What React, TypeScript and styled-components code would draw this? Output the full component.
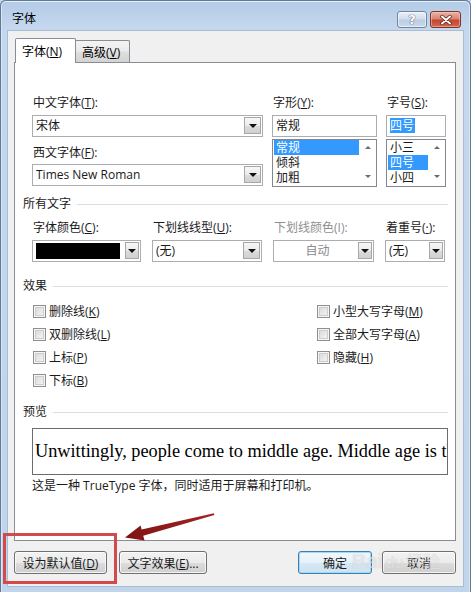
import React from "react";
import styled, { createGlobalStyle, css } from "styled-components";

const GlobalStyle = createGlobalStyle`
  html, body { margin: 0; padding: 0; background: #c2d5ec; }
  body {
    font-family: "Open Sans", "Noto Sans CJK SC", sans-serif;
    font-size: 12px;
    color: #1a1a1a;
  }
  * { box-sizing: border-box; }
`;

const Frame = styled.div`
  position: relative;
  width: 471px;
  height: 592px;
  padding: 0 8px 6px;
  display: flex;
  flex-direction: column;
  background: linear-gradient(180deg, #b3cbe6 0px, #c4d7ee 28px, #c0d4eb 100%);
  border-radius: 6px 6px 0 0;
  box-shadow: inset 0 1px 0 #5f7a98, inset 1px 0 0 #5f7a98, inset -1px 0 0 #5f7a98,
    inset 0 2px 0 #e6eef8, inset 2px 0 0 #dbe6f3, inset -2px 0 0 #dbe6f3;
  overflow: hidden;
`;

const TitleBar = styled.div`
  height: 31px;
  display: flex;
  align-items: flex-start;
  justify-content: space-between;
`;

const Title = styled.div`
  padding: 11px 0 0 4px;
  line-height: 16px;
  font-size: 12px;
  color: #000;
`;

const CaptionButtons = styled.div`
  display: flex;
  gap: 3px;
  margin: 11px 2px 0 0;
`;

const CaptionButton = styled.div<{ $close?: boolean }>`
  width: ${(p) => (p.$close ? 31 : 30)}px;
  height: 17px;
  border-radius: 3px;
  display: flex;
  align-items: center;
  justify-content: center;
  font-weight: 700;
  font-size: 13px;
  font-family: "DejaVu Sans", sans-serif;
  color: #fff;
  ${(p) =>
    p.$close
      ? css`
          border: 1px solid #7d3328;
          background: linear-gradient(180deg, #eab2a4 0%, #d98672 45%, #c5452f 55%, #d2674f 100%);
          box-shadow: inset 0 0 0 1px rgba(255, 220, 210, 0.45);
        `
      : css`
          border: 1px solid #6f86a3;
          background: linear-gradient(180deg, #e9f0f8 0%, #d3dfed 45%, #bccde2 55%, #cbd9ea 100%);
          box-shadow: inset 0 0 0 1px rgba(255, 255, 255, 0.55);
          text-shadow: 0 0 1px #3d5573, 0 0 1px #3d5573;
        `}
`;

const Client = styled.div`
  flex: 1;
  background: #f0f0f0;
  padding: 7px 7px 0 6px;
  display: flex;
  flex-direction: column;
  box-shadow: 0 0 0 1px #a9bcd3;
`;

const TabStrip = styled.div`
  display: flex;
  align-items: flex-end;
  height: 24px;
  padding-left: 1px;
  position: relative;
  z-index: 1;
`;

const Tab = styled.div<{ $active?: boolean }>`
  border: 1px solid #898c95;
  border-bottom: none;
  border-radius: 2px 2px 0 0;
  padding-left: 6px;
  display: flex;
  align-items: center;
  white-space: nowrap;
  color: #000;
  ${(p) =>
    p.$active
      ? css`
          width: 61px;
          height: 25px;
          margin-bottom: -1px;
          background: #fff;
          position: relative;
          z-index: 2;
          padding-bottom: 1px;
        `
      : css`
          width: 55px;
          height: 22px;
          margin-left: -1px;
          background: linear-gradient(180deg, #f3f3f3 0%, #ebebeb 45%, #dedede 55%, #d3d3d3 100%);
        `}
`;

const Panel = styled.div`
  height: 479px;
  background: #fff;
  border: 1px solid #898c95;
  padding: 31px 7px 0 8px;
  display: flex;
  flex-direction: column;
`;

const FontGrid = styled.div`
  display: grid;
  grid-template-columns: 231px 105px 60px;
  column-gap: 9px;
  margin-left: 9px;
`;

const Column = styled.div`
  display: flex;
  flex-direction: column;
`;

const Label = styled.div<{ $disabled?: boolean; $gap?: number }>`
  height: 18px;
  line-height: 18px;
  padding-left: 1px;
  white-space: nowrap;
  margin-top: ${(p) => p.$gap ?? 0}px;
  color: ${(p) => (p.$disabled ? "#8f8f8f" : "#1a1a1a")};
`;

const Field = styled.div<{ $gap?: number }>`
  height: 22px;
  margin-top: ${(p) => p.$gap ?? 3}px;
  border: 1px solid #abadb3;
  background: #fff;
  display: flex;
  align-items: center;
  padding-left: 3px;
  white-space: nowrap;
  color: #1a1a1a;
`;

const FieldText = styled.span<{ $center?: boolean; $disabled?: boolean }>`
  flex: 1;
  text-align: ${(p) => (p.$center ? "center" : "left")};
  color: ${(p) => (p.$disabled ? "#8a8a8a" : "#1a1a1a")};
  line-height: 16px;
  overflow: hidden;
`;

const DropButton = styled.div<{ $w?: number }>`
  width: ${(p) => p.$w ?? 17}px;
  height: 17px;
  margin-right: 1px;
  margin-top: -1px;
  border: 1px solid #a7a7a7;
  background: linear-gradient(180deg, #f7f7f7 0%, #ececec 50%, #dcdcdc 51%, #d0d0d0 100%);
  display: flex;
  align-items: center;
  justify-content: center;
  flex: none;
  &::after {
    content: "";
    border-left: 4px solid transparent;
    border-right: 4px solid transparent;
    border-top: 4px solid #111;
    margin-top: 1px;
  }
`;

const Selected = styled.span`
  background: #3399ff;
  color: #fff;
  display: inline-block;
  line-height: 15px;
  padding: 0 1px;
  margin-left: -1px;
`;

const ListBox = styled.div`
  height: 48px;
  margin-top: 2px;
  border: 1px solid #828790;
  background: #fff;
  display: flex;
`;

const ListItems = styled.div`
  flex: 1;
  padding: 0 0 0 1px;
  display: flex;
  flex-direction: column;
`;

const ListItem = styled.div<{ $selected?: boolean }>`
  height: 15px;
  line-height: 15px;
  padding-left: 2px;
  white-space: nowrap;
  overflow: hidden;
  background: ${(p) => (p.$selected ? "#3399ff" : "transparent")};
  color: ${(p) => (p.$selected ? "#fff" : "#1a1a1a")};
`;

const ScrollCol = styled.div`
  width: 17px;
  display: flex;
  flex-direction: column;
  justify-content: space-between;
  align-items: center;
  padding: 6px 0 8px;
`;

const ScrollArrow = styled.div<{ $up?: boolean }>`
  width: 0;
  height: 0;
  border-left: 3px solid transparent;
  border-right: 3px solid transparent;
  ${(p) => (p.$up ? "border-bottom: 3px solid #6a6a6a;" : "border-top: 3px solid #6a6a6a;")}
`;

const SectionHeader = styled.div<{ $gap: number }>`
  display: flex;
  align-items: center;
  gap: 6px;
  height: 18px;
  line-height: 18px;
  margin-top: ${(p) => p.$gap}px;
  white-space: nowrap;
  color: #1a1a1a;
  &::after {
    content: "";
    flex: 1;
    height: 1px;
    background: #d5dfe5;
  }
`;

const AllTextGrid = styled.div`
  display: grid;
  grid-template-columns: 109px 110px 101px 60px;
  column-gap: 11px;
  margin: 6px 0 0 9px;
`;

const ColorSwatch = styled.div`
  width: 86px;
  height: 16px;
  background: #000;
  margin-right: 5px;
`;

const EffectsGrid = styled.div`
  display: grid;
  grid-template-columns: 284px auto;
  margin: 5px 0 0 10px;
`;

const CheckRow = styled.div`
  height: 23px;
  display: flex;
  align-items: center;
  gap: 3px;
  white-space: nowrap;
`;

const CheckText = styled.span`
  line-height: 16px;
  color: #1a1a1a;
`;

const Checkbox = styled.span`
  width: 13px;
  height: 13px;
  border: 1px solid #8e8f8f;
  background: linear-gradient(135deg, #d6d6d6 0%, #e9e9e9 55%, #f8f8f8 100%);
  box-shadow: inset 0 0 0 1px #f5f5f5, inset 0 0 0 2px #cdcdcd;
  flex: none;
`;

const Preview = styled.div`
  height: 47px;
  margin: 7px 0 0 9px;
  border: 1px solid #6b6b6b;
  display: flex;
  align-items: center;
  padding-left: 2px;
  overflow: hidden;
  white-space: nowrap;
  font-family: "Liberation Serif", "Times New Roman", serif;
  font-size: 18.3px;
  color: #000;
`;

const Info = styled.div`
  margin: 2px 0 0 9px;
  line-height: 18px;
  white-space: nowrap;
`;

const ButtonRow = styled.div`
  display: flex;
  margin-top: 10px;
  height: 23px;
`;

const Button = styled.div<{ $w: number; $primary?: boolean; $push?: boolean; $gap?: number }>`
  width: ${(p) => p.$w}px;
  height: 23px;
  margin-left: ${(p) => (p.$push ? "auto" : `${p.$gap ?? 0}px`)};
  border: 1px solid ${(p) => (p.$primary ? "#3c7fb1" : "#707070")};
  border-radius: 3px;
  display: flex;
  align-items: center;
  justify-content: center;
  white-space: nowrap;
  color: #1a1a1a;
  background: ${(p) =>
    p.$primary
      ? "linear-gradient(180deg, #f2f8fc 0%, #e6f1f9 50%, #d7e8f4 51%, #cde2f1 100%)"
      : "linear-gradient(180deg, #f2f2f2 0%, #ebebeb 50%, #dddddd 51%, #cfcfcf 100%)"};
  box-shadow: inset 0 0 0 1px ${(p) => (p.$primary ? "#a6d8f2" : "rgba(255,255,255,0.75)")};
`;

const RedBox = styled.div`
  position: absolute;
  left: 3px;
  top: 533px;
  width: 114px;
  height: 51px;
  border: 3px solid #d24a4c;
  pointer-events: none;
`;

const ArrowSvg = styled.svg`
  position: absolute;
  left: 0;
  top: 0;
  width: 471px;
  height: 592px;
  pointer-events: none;
`;

const Watermark = styled.div`
  position: absolute;
  left: 352px;
  top: 548px;
  display: flex;
  align-items: baseline;
  gap: 2px;
  font-family: "Liberation Sans", "Noto Sans CJK SC", sans-serif;
  font-weight: 700;
  font-size: 20px;
  color: rgba(255, 255, 255, 0.5);
  text-shadow: 0 0 1px rgba(110, 110, 110, 0.3);
  pointer-events: none;
`;

const WatermarkSmall = styled.span`
  font-size: 17px;
  font-weight: 400;
`;

function Check({ children }: { children: React.ReactNode }) {
  return (
    <CheckRow>
      <Checkbox />
      <CheckText>{children}</CheckText>
    </CheckRow>
  );
}

export default function App() {
  return (
    <>
      <GlobalStyle />
      <Frame>
        <TitleBar>
          <Title>字体</Title>
          <CaptionButtons>
            <CaptionButton>?</CaptionButton>
            <CaptionButton $close>
              <svg width="12" height="10" viewBox="0 0 12 10">
                <path d="M2 1.5 L10 8.5 M10 1.5 L2 8.5" stroke="#5a1a12" strokeWidth="3.4" strokeLinecap="round" />
                <path d="M2 1.5 L10 8.5 M10 1.5 L2 8.5" stroke="#fff" strokeWidth="2" strokeLinecap="round" />
              </svg>
            </CaptionButton>
          </CaptionButtons>
        </TitleBar>
        <Client>
          <TabStrip>
            <Tab $active>
              <span>
                字体(<u>N</u>)
              </span>
            </Tab>
            <Tab>
              <span>
                高级(<u>V</u>)
              </span>
            </Tab>
          </TabStrip>
          <Panel>
            <FontGrid>
              <Column>
                <Label>
                  中文字体(<u>T</u>):
                </Label>
                <Field>
                  <FieldText>宋体</FieldText>
                  <DropButton />
                </Field>
                <Label $gap={7}>
                  西文字体(<u>F</u>):
                </Label>
                <Field $gap={2}>
                  <FieldText>Times New Roman</FieldText>
                  <DropButton />
                </Field>
              </Column>
              <Column>
                <Label>
                  字形(<u>Y</u>):
                </Label>
                <Field>
                  <FieldText>常规</FieldText>
                </Field>
                <ListBox>
                  <ListItems>
                    <ListItem $selected>常规</ListItem>
                    <ListItem>倾斜</ListItem>
                    <ListItem>加粗</ListItem>
                  </ListItems>
                  <ScrollCol>
                    <ScrollArrow $up />
                    <ScrollArrow />
                  </ScrollCol>
                </ListBox>
              </Column>
              <Column>
                <Label>
                  字号(<u>S</u>):
                </Label>
                <Field>
                  <FieldText>
                    <Selected>四号</Selected>
                  </FieldText>
                </Field>
                <ListBox>
                  <ListItems>
                    <ListItem>小三</ListItem>
                    <ListItem $selected>四号</ListItem>
                    <ListItem>小四</ListItem>
                  </ListItems>
                  <ScrollCol>
                    <ScrollArrow $up />
                    <ScrollArrow />
                  </ScrollCol>
                </ListBox>
              </Column>
            </FontGrid>

            <SectionHeader $gap={8}>所有文字</SectionHeader>
            <AllTextGrid>
              <Column>
                <Label>
                  字体颜色(<u>C</u>):
                </Label>
                <Field>
                  <ColorSwatch />
                  <DropButton $w={14} />
                </Field>
              </Column>
              <Column>
                <Label>
                  下划线线型(<u>U</u>):
                </Label>
                <Field>
                  <FieldText>(无)</FieldText>
                  <DropButton />
                </Field>
              </Column>
              <Column>
                <Label $disabled>下划线颜色(I):</Label>
                <Field>
                  <FieldText $center $disabled>
                    自动
                  </FieldText>
                  <DropButton $w={14} />
                </Field>
              </Column>
              <Column>
                <Label>
                  着重号(<u>·</u>):
                </Label>
                <Field>
                  <FieldText>(无)</FieldText>
                  <DropButton $w={14} />
                </Field>
              </Column>
            </AllTextGrid>

            <SectionHeader $gap={15}>效果</SectionHeader>
            <EffectsGrid>
              <Column>
                <Check>
                  删除线(<u>K</u>)
                </Check>
                <Check>
                  双删除线(<u>L</u>)
                </Check>
                <Check>
                  上标(<u>P</u>)
                </Check>
                <Check>
                  下标(<u>B</u>)
                </Check>
              </Column>
              <Column>
                <Check>
                  小型大写字母(<u>M</u>)
                </Check>
                <Check>
                  全部大写字母(<u>A</u>)
                </Check>
                <Check>
                  隐藏(<u>H</u>)
                </Check>
              </Column>
            </EffectsGrid>

            <SectionHeader $gap={11}>预览</SectionHeader>
            <Preview>Unwittingly, people come to middle age. Middle age is the</Preview>
            <Info>这是一种 TrueType 字体，同时适用于屏幕和打印机。</Info>
          </Panel>
          <ButtonRow>
            <Button $w={93}>
              <span>
                设为默认值(<u>D</u>)
              </span>
            </Button>
            <Button $w={88} $gap={12}>
              <span>
                文字效果(<u>E</u>)...
              </span>
            </Button>
            <Button $w={74} $push $primary>
              确定
            </Button>
            <Button $w={74} $gap={10}>
              取消
            </Button>
          </ButtonRow>
        </Client>
        <RedBox />
        <ArrowSvg viewBox="0 0 471 592">
          <defs>
            <linearGradient id="arw" x1="0" y1="0" x2="1" y2="0">
              <stop offset="0" stopColor="#7d1414" />
              <stop offset="1" stopColor="#a32424" />
            </linearGradient>
          </defs>
          <polygon
            points="125,537.5 140.6,525.4 141.6,529.6 213.8,513.3 214.4,515 143.2,535.8 144.6,540.5"
            fill="url(#arw)"
          />
        </ArrowSvg>
        <Watermark>
          Bai<WatermarkSmall>du</WatermarkSmall>
          <WatermarkSmall>经验</WatermarkSmall>
        </Watermark>
      </Frame>
    </>
  );
}
